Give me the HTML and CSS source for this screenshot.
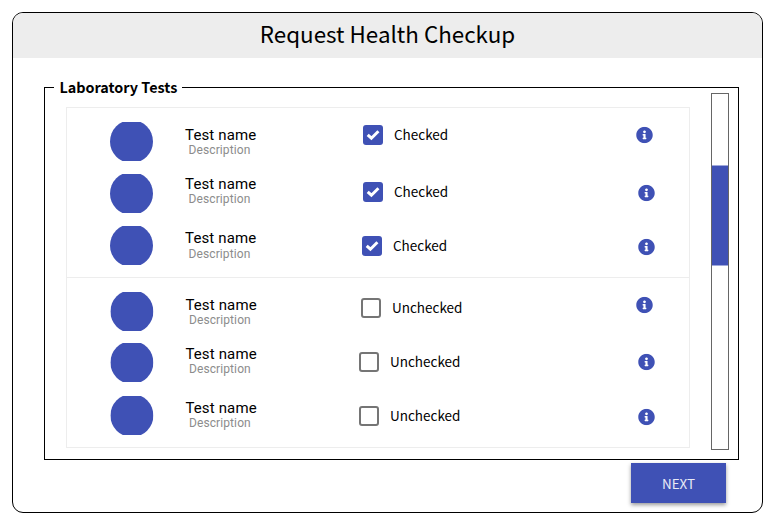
FILE: index.html
```html
<!DOCTYPE html>
<html lang="en">
<head>
<meta charset="utf-8">
<title>Request Health Checkup</title>
<link rel="stylesheet" href="styles.css">
</head>
<body>
<svg class="defs" aria-hidden="true">
  <symbol id="info" viewBox="0 0 512 512"><path d="M256 8C119 8 8 119 8 256s111 248 248 248 248-111 248-248S393 8 256 8zm0 110c23 0 42 19 42 42s-19 42-42 42-42-19-42-42 19-42 42-42zm56 254c0 7-5 12-12 12h-88c-7 0-12-5-12-12v-24c0-7 5-12 12-12h12v-64h-12c-7 0-12-5-12-12v-24c0-7 5-12 12-12h64c7 0 12 5 12 12v100h12c7 0 12 5 12 12v24z"/></symbol>
  <symbol id="disc" viewBox="0 0 43 39"><circle cx="21.5" cy="19.5" r="21.5"/></symbol>
  <symbol id="check" viewBox="0 0 20 20"><path d="M4.7 9.8 8.4 13.2 15.4 6.3" fill="none" stroke="#fff" stroke-width="3"/></symbol>
</svg>
<main class="dialog">
  <h1 class="title">Request Health Checkup</h1>
  <fieldset class="tests">
    <legend>Laboratory Tests</legend>
    <div class="list">
      <section class="group">
        <div class="row r1"><svg class="disc"><use href="#disc"/></svg><div class="text"><div class="name">Test name</div><div class="desc">Description</div></div><div class="option"><span class="box on"><svg><use href="#check"/></svg></span><span>Checked</span></div><svg class="info"><use href="#info"/></svg></div>
        <div class="row r2"><svg class="disc"><use href="#disc"/></svg><div class="text"><div class="name">Test name</div><div class="desc">Description</div></div><div class="option"><span class="box on"><svg><use href="#check"/></svg></span><span>Checked</span></div><svg class="info"><use href="#info"/></svg></div>
        <div class="row r3"><svg class="disc"><use href="#disc"/></svg><div class="text"><div class="name">Test name</div><div class="desc">Description</div></div><div class="option"><span class="box on"><svg><use href="#check"/></svg></span><span>Checked</span></div><svg class="info"><use href="#info"/></svg></div>
      </section>
      <section class="group">
        <div class="row r4"><svg class="disc"><use href="#disc"/></svg><div class="text"><div class="name">Test name</div><div class="desc">Description</div></div><div class="option"><span class="box"></span><span>Unchecked</span></div><svg class="info"><use href="#info"/></svg></div>
        <div class="row r5"><svg class="disc"><use href="#disc"/></svg><div class="text"><div class="name">Test name</div><div class="desc">Description</div></div><div class="option"><span class="box"></span><span>Unchecked</span></div><svg class="info"><use href="#info"/></svg></div>
        <div class="row r6"><svg class="disc"><use href="#disc"/></svg><div class="text"><div class="name">Test name</div><div class="desc">Description</div></div><div class="option"><span class="box"></span><span>Unchecked</span></div><svg class="info"><use href="#info"/></svg></div>
      </section>
    </div>
    <div class="track"><div class="thumb"></div></div>
  </fieldset>
  <button class="next">NEXT</button>
</main>
</body>
</html>
```

FILE: styles.css
```css
* { box-sizing: border-box; }
body {
  margin: 0;
  padding: 12px;
  background: #fff;
  color: #000;
  font-family: "Noto Sans CJK SC", "Noto Sans", sans-serif;
}
.defs { display: none; }
svg { display: block; }
.dialog {
  width: 751px;
  height: 501px;
  border: 1px solid #000;
  border-radius: 11px;
  overflow: hidden;
}
.title {
  margin: 0;
  height: 45px;
  background: #ededed;
  font-size: 22.4px;
  font-weight: 400;
  line-height: 40px;
  text-align: center;
}
.tests {
  display: flex;
  align-items: flex-start;
  width: 695px;
  height: 383px;
  margin: 19px 0 0 31px;
  padding: 0 9px 0 21px;
  border: 1px solid #000;
}
.tests legend {
  margin-left: -12px;
  padding: 0 5.4px;
  width: 128px;
  height: 21px;
  font-size: 14.4px;
  font-weight: 700;
  line-height: 20px;
  white-space: nowrap;
}
.list {
  width: 624px;
  height: 341px;
  margin-top: 9px;
  border: 1px solid #ededed;
}
.group { height: 170px; padding-top: 14px; }
.group:first-child { border-bottom: 1px solid #ededed; }
.row {
  display: grid;
  grid-template-columns: 43px 107px 145px 120px 1fr;
  align-items: start;
  height: 52px;
  padding-left: 43px;
}
.disc { width: 43px; height: 39px; fill: #3f51b5; }
.text {
  grid-column: 2;
  margin-left: 32px;
  padding-top: var(--name);
  width: 71px;
  font-family: Roboto, sans-serif;
  text-align: center;
  white-space: nowrap;
}
.name { font-size: 15px; line-height: 16px; letter-spacing: .15px; }
.desc { font-size: 12px; line-height: 14px; color: #8c8c8c; margin-top: var(--gap, 0); padding-right: 2px; letter-spacing: .1px; }
.option {
  grid-column: 3;
  display: flex;
  align-items: center;
  gap: 11px;
  height: 20px;
  margin: var(--check) 0 0 var(--checkx);
  font-size: 13.5px;
  line-height: 20px;
}
.option > span:last-child { padding-bottom: 2px; }
.box {
  flex: none;
  width: 20px;
  height: 20px;
  border: 2px solid #757575;
  border-radius: 3px;
}
.box.on { border: 0; background: #3f51b5; }
.box svg { width: 20px; height: 20px; }
.info {
  grid-column: 5;
  width: 17px;
  height: 17px;
  margin: var(--info) 0 0 var(--infox);
  transform: translateY(-.5px);
  fill: #3f51b5;
}
.r1 { --name: 5px; --check: 3px; --checkx: 103px; --info: 5px; --infox: 111px; }
.r2 { --name: 2px; --check: 8px; --checkx: 103px; --info: 11px; --infox: 113px; }
.r3 { --name: 4px; --gap: 1px; --check: 10px; --checkx: 102px; --info: 13px; --infox: 113px; }
.r4 { --name: 5px; --check: 6px; --checkx: 101px; --info: 5px; --infox: 111px; height: 51px; }
.r5 { --name: 3px; --check: 9px; --checkx: 99px; --info: 11px; --infox: 113px; height: 53px; }
.r6 { --name: 4px; --check: 10px; --checkx: 99px; --info: 13px; --infox: 113px; }
.group:last-child .disc { transform: translateX(.4px); }
.group:last-child .text { margin-left: 32.4px; }
.track {
  width: 18px;
  height: 357px;
  margin: -5px 0 0 21px;
  padding-top: 71px;
  border: 1px solid #666;
}
.thumb { height: 101px; background: #3f51b5; border: solid #9fa8da; border-width: 1px 0; }
.next {
  display: block;
  width: 95px;
  height: 40px;
  margin: 3px 0 0 618px;
  padding: 0 0 1px;
  border: 0;
  background: #3f51b5;
  color: #e8eaf6;
  font: 13.4px/20px "Noto Sans CJK SC", "Noto Sans", sans-serif;
  box-shadow: 0 2px 4px rgba(0, 0, 0, .4);
}
```
